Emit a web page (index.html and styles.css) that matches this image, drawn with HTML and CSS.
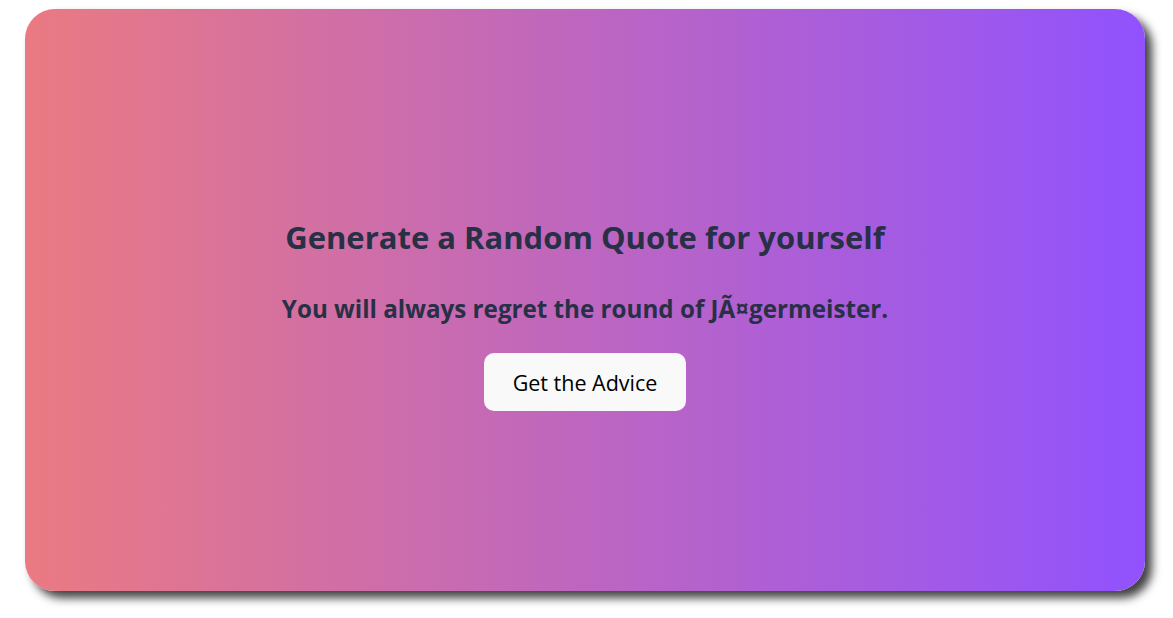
FILE: index.html
```html
<!DOCTYPE html>
<html>
<head>
<meta charset="utf-8">
<link rel="stylesheet" href="styles.css">
</head>
<body>
<main class="card">
  <h1 class="title">Generate a Random Quote for yourself</h1>
  <p class="quote">You will always regret the round of JÃ¤germeister.</p>
  <button class="btn">Get the Advice</button>
</main>
</body>
</html>
```
FILE: styles.css
```css
html, body { margin: 0; padding: 0; background: #ffffff; }
body {
  padding: 9px 28px 27px 25px;
  font-family: "Open Sans", "Noto Sans", sans-serif;
}
.card {
  box-sizing: border-box;
  width: 1120px;
  height: 582px;
  border-radius: 30px;
  background: linear-gradient(to right, #ea7a82, #9152fe);
  box-shadow: 7px 7px 10px rgba(0, 0, 0, 0.75);
  display: flex;
  flex-direction: column;
  align-items: center;
  justify-content: center;
  color: #283046;
  padding-top: 28px;
}
.title {
  margin: 0;
  font-size: 31px;
  font-weight: 700;
  line-height: 40px;
}
.quote {
  margin: 36px 0 0;
  font-size: 24.2px;
  font-weight: 700;
  line-height: 32px;
}
.btn {
  margin-top: 28px;
  width: 202px;
  height: 58px;
  border: none;
  border-radius: 10px;
  background: #f9f9fa;
  color: #000;
  font-family: inherit;
  font-size: 21.5px;
}
```
